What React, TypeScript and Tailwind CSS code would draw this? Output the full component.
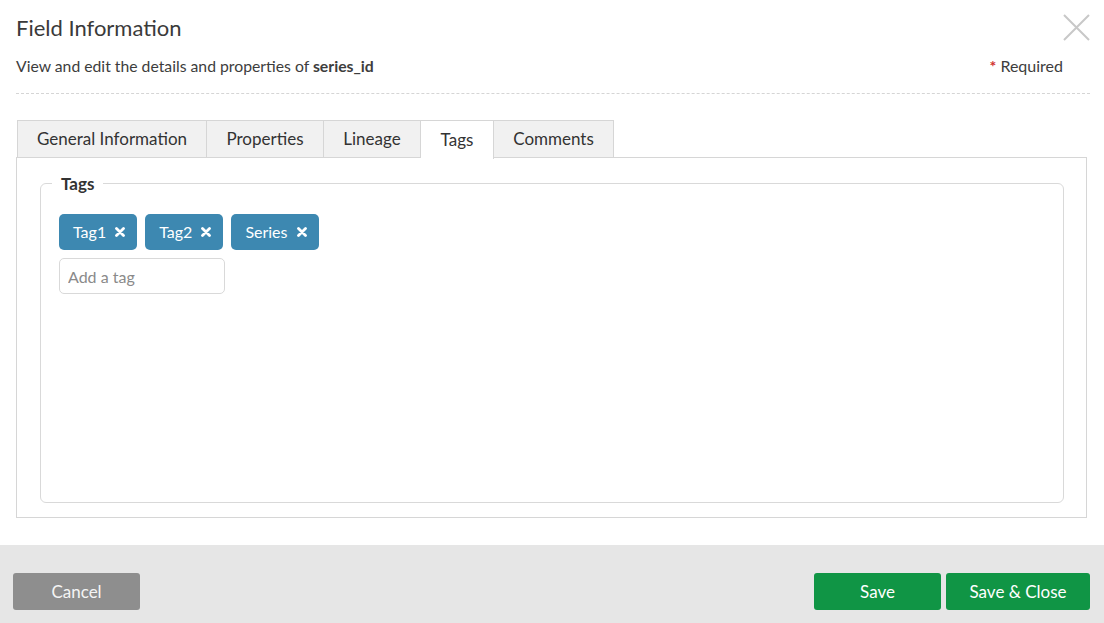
import React from 'react'

const tabs = [
  { label: 'General Information', w: 'w-[190px]' },
  { label: 'Properties', w: 'w-[117px]' },
  { label: 'Lineage', w: 'w-[97px]' },
  { label: 'Tags', w: 'w-[73px]' },
  { label: 'Comments', w: 'w-[120px]' },
]

const tags = ['Tag1', 'Tag2', 'Series']

const CloseIcon = () => (
  <svg width="27" height="27" viewBox="0 0 27 27" fill="none">
    <path d="M1 1 L26 26 M26 1 L1 26" stroke="#c8c8c8" strokeWidth="2" />
  </svg>
)

const RemoveIcon = () => (
  <svg width="10" height="10" viewBox="0 0 10 10" fill="none">
    <path d="M1.5 1.5 L8.5 8.5 M8.5 1.5 L1.5 8.5" stroke="#fff" strokeWidth="2.8" strokeLinecap="round" />
  </svg>
)

export default function App() {
  const active = 'Tags'
  return (
    <div
      className="w-[1104px] h-[623px] bg-white flex flex-col text-[#333]"
      style={{ fontFamily: '"Source Sans Pro", Lato, "Noto Sans", sans-serif' }}
    >
      <div className="flex-1 pl-4 pr-[14px]">
        {/* header */}
        <div className="flex items-start justify-between pt-[13px] h-[50px]">
          <h1 className="text-[22px] leading-[30px] text-[#3a3a3a]">Field Information</h1>
          <button className="mt-[1px]">
            <CloseIcon />
          </button>
        </div>
        <div className="flex items-center justify-between h-[32px] pr-[27px]">
          <p className="text-[15.75px] text-[#3d3d3d]">
            View and edit the details and properties of <span className="font-bold">series_id</span>
          </p>
          <span className="text-[16px] text-[#3d3d3d]">
            <span className="text-[#d0312d] font-bold mr-1">*</span>Required
          </span>
        </div>
        <div className="mt-[11px] border-t border-dashed border-[#d5d5d5]" />

        {/* tabs */}
        <div className="mt-[26px] mr-[4px]">
          <div className="flex pl-[1px]">
            {tabs.map((t, i) => (
              <div
                key={t.label}
                className={`${t.w} h-[38px] flex items-center justify-center text-[17px] border-t border-r border-[#d6d6d6] ${
                  i === 0 ? 'border-l' : ''
                } ${t.label === active ? 'bg-white -mb-px relative z-10 h-[39px]' : 'bg-[#f1f1f1] border-b'}`}
              >
                {t.label}
              </div>
            ))}
          </div>
          <div className="border border-[#d6d6d6] h-[361px] -mt-px pl-[23px] pr-[22px] pt-[15px] pb-[14px] -mr-px">
            <fieldset className="h-full border border-[#d9d9d9] rounded-[6px] pl-[18px] pr-4 pt-[21px]">
              <legend className="-ml-[7px] px-[9px] text-[17px] font-bold text-[#333] leading-5 translate-y-[1px]">Tags</legend>
              <div className="flex gap-2">
                {tags.map((t) => (
                  <span
                    key={t}
                    className="h-[36px] flex items-center gap-[9px] pl-[14px] pr-[12px] rounded-[5px] bg-[#3d88b1] text-white text-[16px]"
                  >
                    {t}
                    <RemoveIcon />
                  </span>
                ))}
              </div>
              <input
                placeholder="Add a tag"
                className="mt-[8px] w-[166px] h-[36px] border border-[#d9d9d9] rounded-[5px] px-2 text-[16px] placeholder:text-[#8a8a8a] outline-none"
              />
            </fieldset>
          </div>
        </div>
      </div>

      {/* footer */}
      <div className="h-[78px] bg-[#e6e6e6] flex items-start justify-between pl-[13px] pr-[14px] pt-[28px]">
        <button className="w-[127px] h-[37px] rounded-[3px] bg-[#8e8e8e] text-[#f5f5f5] text-[17px]">Cancel</button>
        <div className="flex gap-[5px]">
          <button className="w-[127px] h-[37px] rounded-[3px] bg-[#109545] text-white text-[17px]">Save</button>
          <button className="w-[144px] h-[37px] rounded-[3px] bg-[#109545] text-white text-[17px]">Save &amp; Close</button>
        </div>
      </div>
    </div>
  )
}
